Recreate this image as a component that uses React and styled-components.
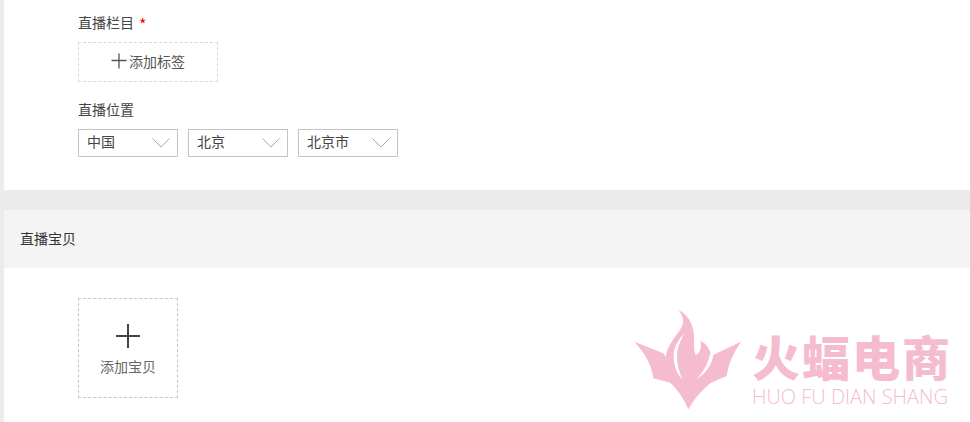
import styled, { createGlobalStyle } from "styled-components";

const GlobalStyle = createGlobalStyle`
  html, body {
    margin: 0;
    padding: 0;
    background: #ebebeb;
  }
  body {
    font-family: "Noto Sans CJK SC", "Liberation Sans", sans-serif;
    font-size: 14px;
    color: #444;
  }
`;

const locations = ["中国", "北京", "北京市"];

const Chevron = () => (
  <svg width="18" height="10" viewBox="0 0 18 10" fill="none">
    <path d="M0.5 0.5 L9 9 L17.5 0.5" stroke="#a8a8a8" strokeWidth="1" />
  </svg>
);

export default function App() {
  return (
    <Page>
      <GlobalStyle />
      <Card>
        <Label>
          直播栏目<Star>*</Star>
        </Label>
        <AddTag>
          <svg width="16" height="16" viewBox="0 0 16 16">
            <path d="M0.5 7.5 H15.5 M8 0.5 V15.5" stroke="#555" strokeWidth="1.3" />
          </svg>
          添加标签
        </AddTag>
        <Label second>直播位置</Label>
        <SelectRow>
          {locations.map((name) => (
            <Select key={name}>
              <span>{name}</span>
              <Chevron />
            </Select>
          ))}
        </SelectRow>
      </Card>
      <Section>
        <SectionHead>直播宝贝</SectionHead>
        <SectionBody>
          <AddItem>
            <svg width="24" height="24" viewBox="0 0 24 24">
              <path d="M0 12 H24 M12 0 V24" stroke="#3f4650" strokeWidth="2" />
            </svg>
            <AddText>添加宝贝</AddText>
          </AddItem>
        </SectionBody>
      </Section>
      <Watermark>
        <svg width="130" height="115" viewBox="0 0 390 345">
          <path
            d="M28 125 L115 160 L122 170 C126 140 150 112 165 90 C178 72 178 50 160 30 C185 40 205 70 207 105 C208 130 205 150 212 165 C225 160 232 140 225 122 C245 130 256 148 258 168 L348 125 C325 160 310 190 305 228 L258 248 C230 270 205 300 190 328 C178 300 160 270 135 248 L85 235 C80 190 55 155 28 125 Z"
            fill="#f5bccf"
          />
          <path
            d="M178 100 C160 120 146 140 146 170 C146 195 155 220 172 238 C162 215 156 195 156 172 C156 145 165 125 178 100 Z"
            fill="#fff"
          />
          <path
            d="M266 160 C262 195 240 225 212 238 C232 222 248 195 254 165 Z"
            fill="#fff"
          />
        </svg>
        <Brand>
          <BrandName>火蝠电商</BrandName>
          <BrandPinyin>HUO FU DIAN SHANG</BrandPinyin>
        </Brand>
      </Watermark>
    </Page>
  );
}

const Page = styled.div`
  position: relative;
  width: 970px;
  height: 422px;
  overflow: hidden;
  padding-left: 4px;
  box-sizing: border-box;
`;

const Card = styled.div`
  height: 190px;
  box-sizing: border-box;
  background: #fff;
  padding: 13px 0 0 74px;
`;

const Label = styled.div`
  height: 19px;
  line-height: 19px;
  margin-top: ${(props) => (props.second ? "18px" : "0")};
  color: #444;
`;

const Star = styled.span`
  color: #f00;
  margin-left: 5px;
  font-size: 16px;
  line-height: 0;
  vertical-align: -3px;
`;

const AddTag = styled.div`
  display: flex;
  align-items: center;
  justify-content: center;
  gap: 2px;
  width: 140px;
  height: 40px;
  box-sizing: border-box;
  margin-top: 10px;
  padding-bottom: 2px;
  border: 1px dashed #d8d8d8;
  color: #555;
`;

const SelectRow = styled.div`
  display: flex;
  gap: 10px;
  margin-top: 10px;
`;

const Select = styled.div`
  display: flex;
  align-items: center;
  justify-content: space-between;
  width: 100px;
  height: 28px;
  box-sizing: border-box;
  padding: 0 7px 5px 8px;
  border: 1px solid #c4c4c4;
  color: #444;

  svg {
    margin-top: 5px;
  }
`;

const Section = styled.div`
  margin-top: 20px;
  background: #fff;
`;

const SectionHead = styled.div`
  height: 58px;
  line-height: 56px;
  padding-left: 16px;
  background: #f4f4f4;
  color: #333;
`;

const SectionBody = styled.div`
  padding: 30px 0 24px 74px;
`;

const AddItem = styled.div`
  display: flex;
  flex-direction: column;
  align-items: center;
  width: 100px;
  height: 100px;
  box-sizing: border-box;
  padding-top: 25px;
  border: 1px dashed #c4c4c4;
`;

const AddText = styled.div`
  margin-top: 8px;
  color: #666;
`;

const Watermark = styled.div`
  position: absolute;
  left: 625px;
  top: 300px;
  display: flex;
  pointer-events: none;
`;

const Brand = styled.div`
  display: flex;
  flex-direction: column;
  align-items: flex-start;
  margin-left: -3px;
  padding-top: 27px;
`;

const BrandName = styled.div`
  font-size: 48px;
  line-height: 56px;
  font-weight: 900;
  letter-spacing: 2px;
  color: #f5bccf;
  white-space: nowrap;
`;

const BrandPinyin = styled.div`
  font-family: "Open Sans", "Liberation Sans", sans-serif;
  font-size: 20px;
  font-weight: 300;
  line-height: 22px;
  color: #f5bccf;
  white-space: nowrap;
  margin-top: 3px;
`;
